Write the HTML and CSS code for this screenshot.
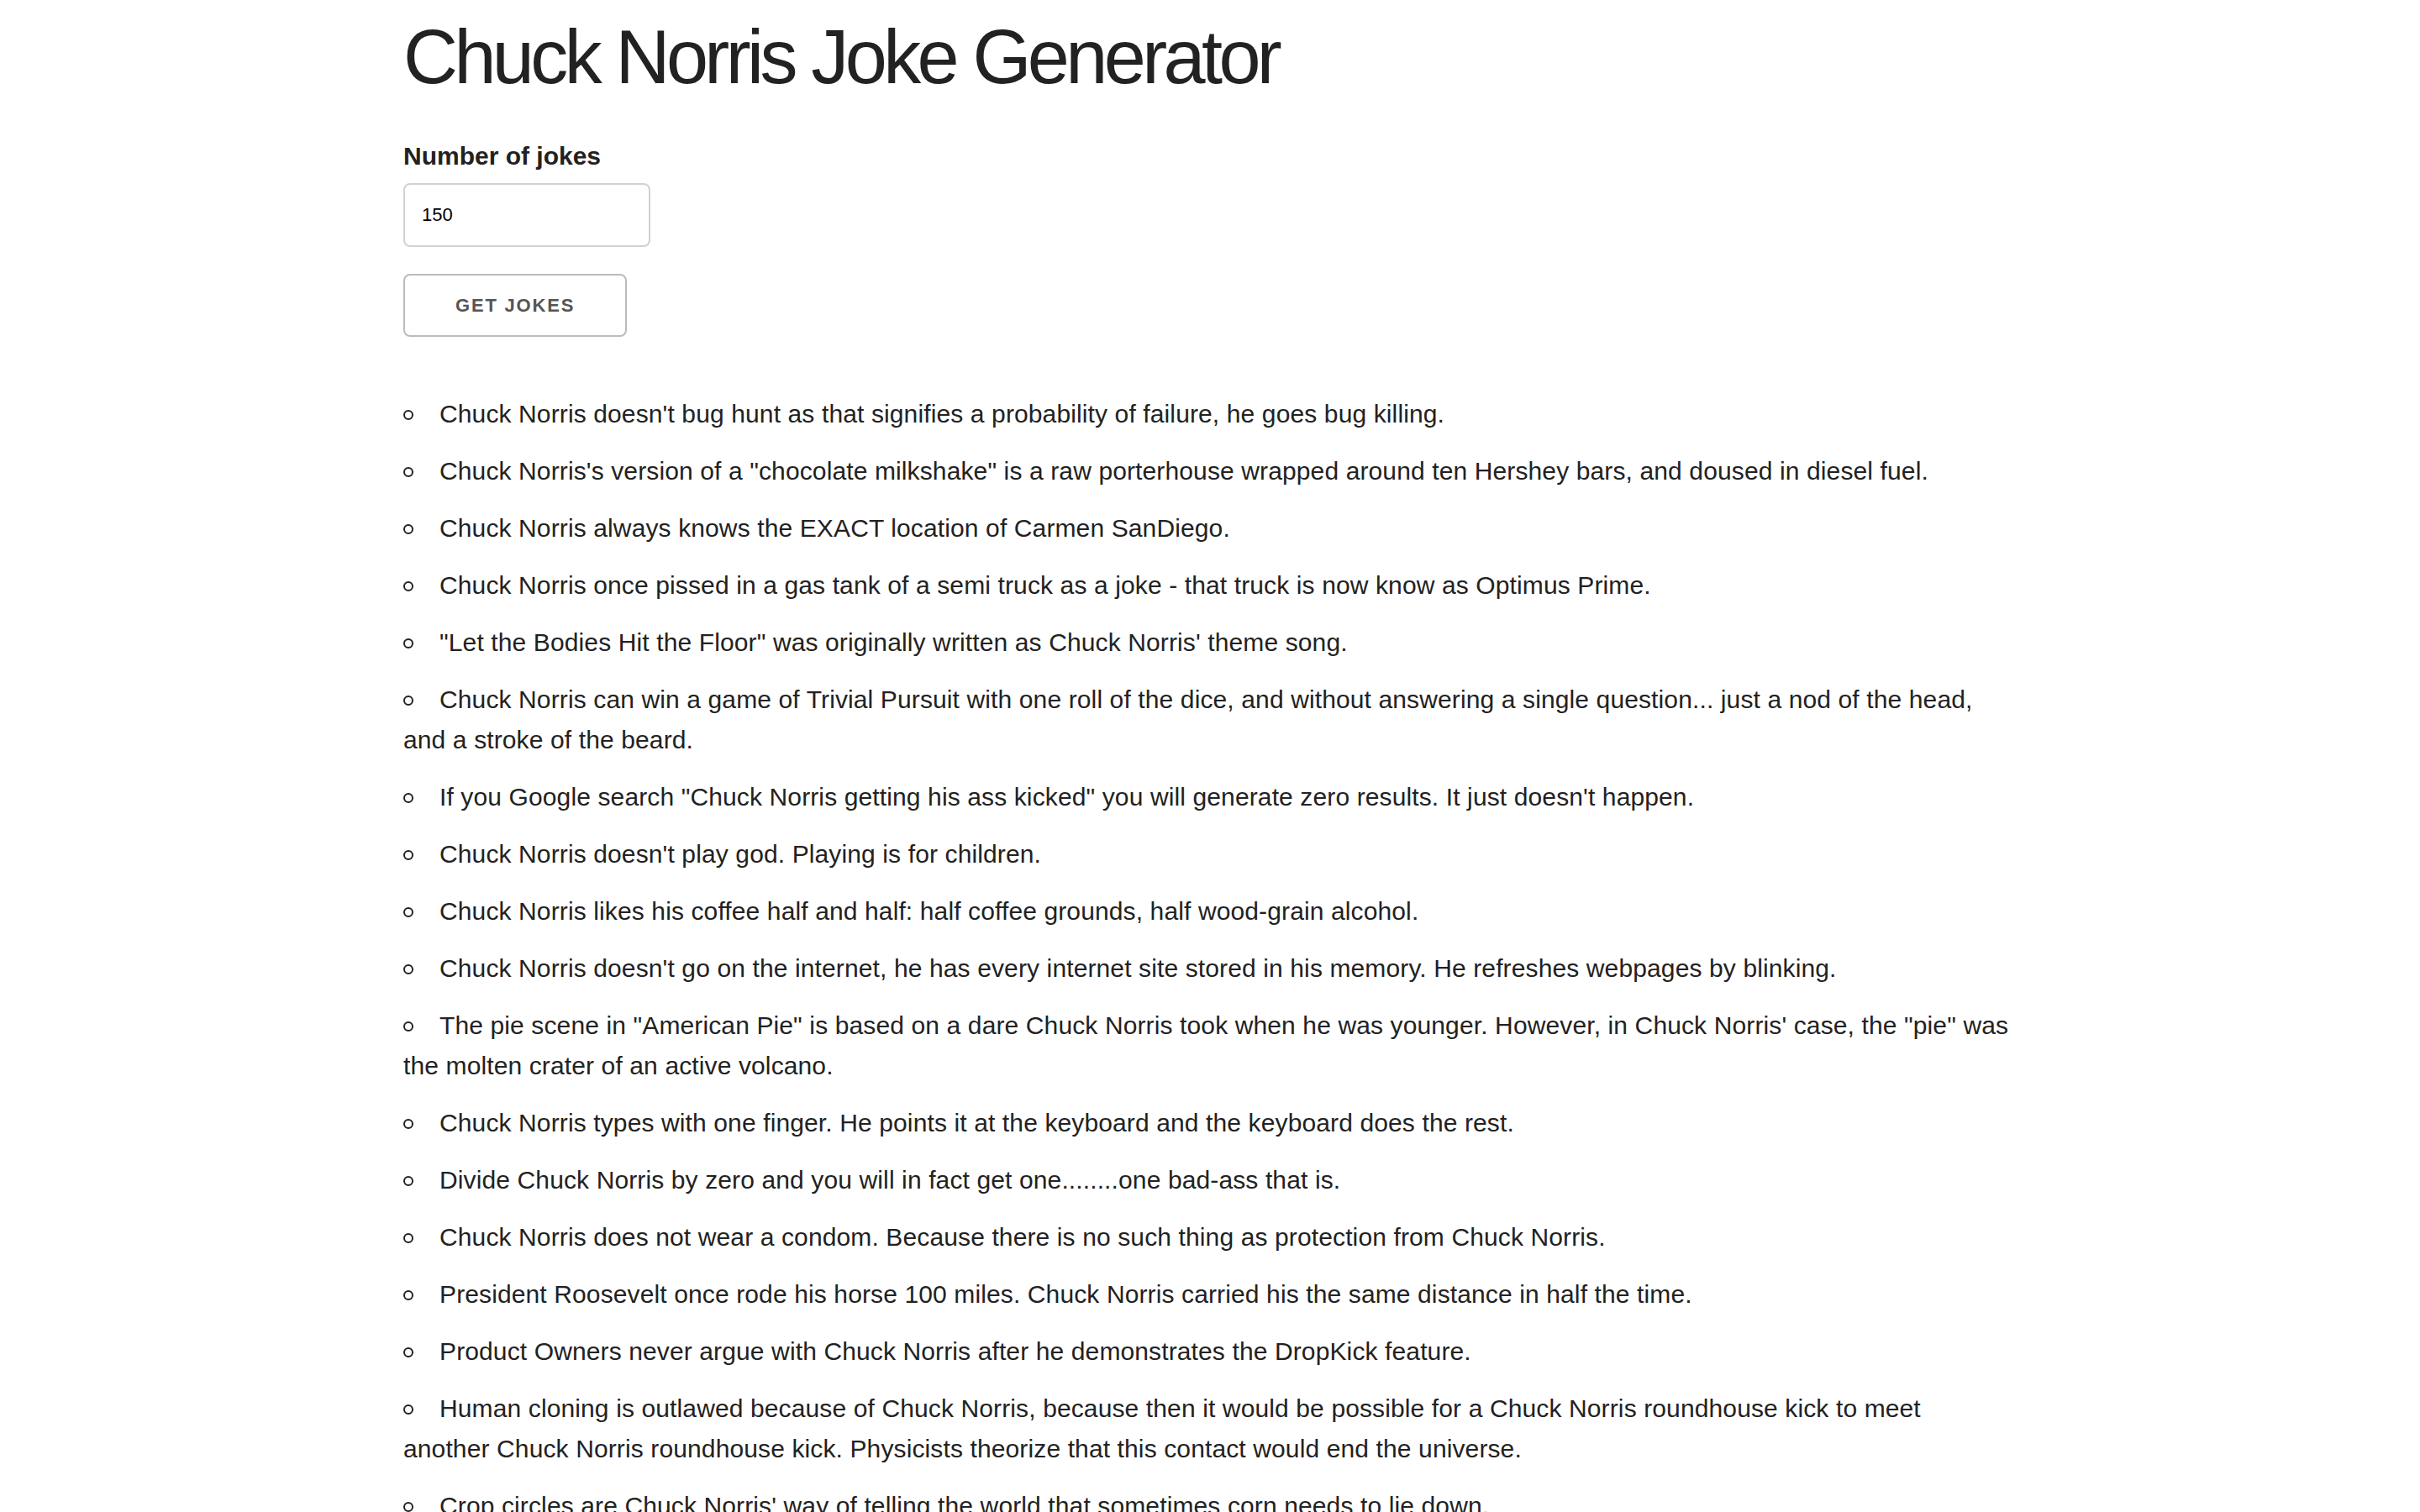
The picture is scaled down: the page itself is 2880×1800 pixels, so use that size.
FILE: index.html
```html
<!DOCTYPE html>
<html lang="en">
<head>
<meta charset="utf-8">
<title>Chuck Norris Joke Generator</title>
<link rel="stylesheet" href="styles.css">
</head>
<body>
<div class="container">
  <h1 class="title">Chuck Norris Joke Generator</h1>
  <form class="joke-form">
    <label class="field-label" for="count">Number of jokes</label>
    <input class="field-input" id="count" type="text" value="150">
    <button class="button" type="button">Get Jokes</button>
  </form>
  <ul class="jokes">
    <li class="joke">Chuck Norris doesn't bug hunt as that signifies a probability of failure, he goes bug killing.</li>
    <li class="joke">Chuck Norris's version of a "chocolate milkshake" is a raw porterhouse wrapped around ten Hershey bars, and doused in diesel fuel.</li>
    <li class="joke">Chuck Norris always knows the EXACT location of Carmen SanDiego.</li>
    <li class="joke">Chuck Norris once pissed in a gas tank of a semi truck as a joke - that truck is now know as Optimus Prime.</li>
    <li class="joke">"Let the Bodies Hit the Floor" was originally written as Chuck Norris' theme song.</li>
    <li class="joke">Chuck Norris can win a game of Trivial Pursuit with one roll of the dice, and without answering a single question... just a nod of the head, and a stroke of the beard.</li>
    <li class="joke">If you Google search "Chuck Norris getting his ass kicked" you will generate zero results. It just doesn't happen.</li>
    <li class="joke">Chuck Norris doesn't play god. Playing is for children.</li>
    <li class="joke">Chuck Norris likes his coffee half and half: half coffee grounds, half wood-grain alcohol.</li>
    <li class="joke">Chuck Norris doesn't go on the internet, he has every internet site stored in his memory. He refreshes webpages by blinking.</li>
    <li class="joke">The pie scene in "American Pie" is based on a dare Chuck Norris took when he was younger. However, in Chuck Norris' case, the "pie" was the molten crater of an active volcano.</li>
    <li class="joke">Chuck Norris types with one finger. He points it at the keyboard and the keyboard does the rest.</li>
    <li class="joke">Divide Chuck Norris by zero and you will in fact get one........one bad-ass that is.</li>
    <li class="joke">Chuck Norris does not wear a condom. Because there is no such thing as protection from Chuck Norris.</li>
    <li class="joke">President Roosevelt once rode his horse 100 miles. Chuck Norris carried his the same distance in half the time.</li>
    <li class="joke">Product Owners never argue with Chuck Norris after he demonstrates the DropKick feature.</li>
    <li class="joke">Human cloning is outlawed because of Chuck Norris, because then it would be possible for a Chuck Norris roundhouse kick to meet another Chuck Norris roundhouse kick. Physicists theorize that this contact would end the universe.</li>
    <li class="joke">Crop circles are Chuck Norris' way of telling the world that sometimes corn needs to lie down.</li>
  </ul>
</div>
</body>
</html>
```

FILE: styles.css
```css
html, body {
  margin: 0;
  padding: 0;
  background: #fff;
}

body {
  font-family: "Liberation Sans", Arial, Helvetica, sans-serif;
  font-size: 30px;
  line-height: 48px;
  color: #222;
}

.container {
  width: 1920px;
  margin: 0 auto;
  padding-top: 14px;
  box-sizing: border-box;
}

.title {
  margin: 0 0 40px;
  font-size: 90px;
  line-height: 108px;
  font-weight: 400;
  letter-spacing: -4.6px;
  color: #222;
}

.joke-form {
  display: flex;
  flex-direction: column;
  align-items: flex-start;
  margin: 0 0 50px;
}

.field-label {
  display: block;
  margin-bottom: 8px;
  font-weight: 700;
  font-size: 30px;
  line-height: 48px;
}

.field-input {
  width: 294px;
  height: 76px;
  margin: 0 0 32px;
  padding: 12px 20px;
  box-sizing: border-box;
  border: 2px solid #d1d1d1;
  border-radius: 8px;
  background: #fff;
  font-family: "Liberation Sans", Arial, sans-serif;
  font-size: 22px;
  color: #000;
  outline: none;
}

.button {
  height: 75px;
  margin: 0 0 18px;
  padding: 0 60px;
  box-sizing: border-box;
  border: 2px solid #bbb;
  border-radius: 8px;
  background: transparent;
  color: #555;
  font-family: "Liberation Sans", Arial, sans-serif;
  font-size: 22px;
  font-weight: 700;
  letter-spacing: 1.8px;
  line-height: 71px;
  text-transform: uppercase;
  white-space: nowrap;
  cursor: pointer;
}

.jokes {
  list-style: none;
  margin: 0;
  padding: 0 5px 0 0;
}

.joke {
  margin: 0 0 20px;
  letter-spacing: 0.12px;
}

.joke::before {
  content: "";
  display: inline-block;
  width: 12px;
  height: 12px;
  margin-right: 31px;
  border: 2px solid #222;
  border-radius: 50%;
  box-sizing: border-box;
  vertical-align: 3px;
}
```
